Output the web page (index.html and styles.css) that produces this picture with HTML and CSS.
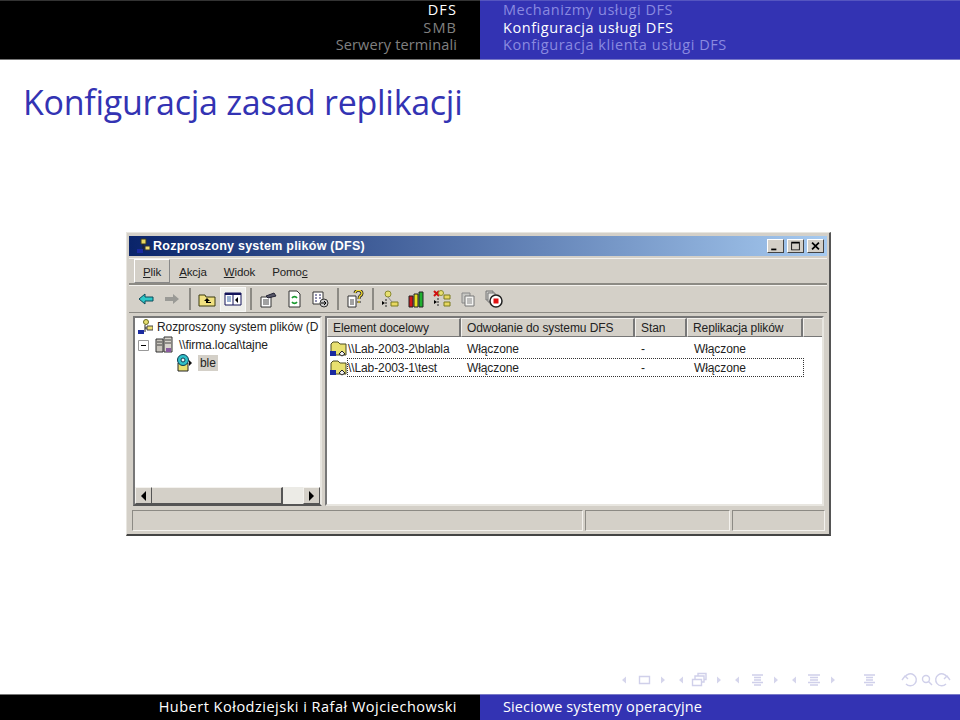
FILE: index.html
```html
<!DOCTYPE html>
<html lang="pl">
<head>
    <meta charset="UTF-8">
    <title>Konfiguracja zasad replikacji</title>
    <link rel="stylesheet" href="styles.css">
</head>
<body>
<div class="slide">
    <header class="top">
        <ul class="top-left">
            <li class="on caps">DFS</li>
            <li class="caps">SMB</li>
            <li>Serwery terminali</li>
        </ul>
        <ul class="top-right">
            <li>Mechanizmy usługi DFS</li>
            <li class="on">Konfiguracja usługi DFS</li>
            <li>Konfiguracja klienta usługi DFS</li>
        </ul>
    </header>

    <h1 class="title">Konfiguracja zasad replikacji</h1>

    <div class="window">
        <div class="titlebar">
            <svg class="ico16" viewBox="0 0 16 16"><path d="M6 1h5v5H6z" fill="#e8d860" stroke="#3a3a20"/><path d="M8 6v7M8 9h4" stroke="#222"/><path d="M10 8h5v4h-5z" fill="#f0e070" stroke="#333"/><path d="M2 11h6v4H2z" fill="#1a2aa0"/></svg>
            <span class="titletext">Rozproszony system plików (DFS)</span>
            <div class="wbtns">
                <span class="wbtn"><svg viewBox="0 0 16 14"><path d="M3 10h6v2H3z" fill="#000"/></svg></span>
                <span class="wbtn"><svg viewBox="0 0 16 14"><path d="M3 2h10v10H3z M4 4v7h8V4z" fill="#000" fill-rule="evenodd"/></svg></span>
                <span class="wbtn close"><svg viewBox="0 0 16 14"><path d="M4 3l8 8M12 3l-8 8" stroke="#000" stroke-width="2"/></svg></span>
            </div>
        </div>

        <div class="menubar">
            <span class="menu open"><u>P</u>lik</span>
            <span class="menu"><u>A</u>kcja</span>
            <span class="menu"><u>W</u>idok</span>
            <span class="menu">Pomo<u>c</u></span>
        </div>

        <div class="toolbar">
            <span class="tool"><svg viewBox="0 0 18 18"><path d="M2 9l6-5v3h8v4H8v3z" fill="#2cc8c8" stroke="#0a4a5a"/></svg></span>
            <span class="tool"><svg viewBox="0 0 18 18"><path d="M16 9l-6-5v3H2v4h8v3z" fill="#9a9a96"/></svg></span>
            <span class="sep"></span>
            <span class="tool"><svg viewBox="0 0 18 18"><path d="M1 5h6l1 2h9v9H1z" fill="#f0e080" stroke="#3a3a10"/><path d="M9 8l-3 3h2v2h5v-1H10v-1h2z" fill="#000"/></svg></span>
            <span class="tool pressed"><svg viewBox="0 0 18 18"><path d="M1 3h16v12H1z" fill="#fff" stroke="#14145a"/><path d="M1 3h16v2H1z" fill="#14145a"/><path d="M9 3v12" stroke="#14145a"/><path d="M3 7h4M3 9h4M3 11h4" stroke="#3a6aaa"/><path d="M14 7v6l-3-3z" fill="#000"/></svg></span>
            <span class="sep"></span>
            <span class="tool"><svg viewBox="0 0 18 18"><path d="M2 7h10v10H2z" fill="#fff" stroke="#333"/><path d="M4 10h6M4 12h6M4 14h6" stroke="#444"/><path d="M7 6l8-3 2 3-8 2z" fill="#556" stroke="#223"/></svg></span>
            <span class="tool"><svg viewBox="0 0 18 18"><path d="M4 1h8l3 3v13H4z" fill="#fff" stroke="#333"/><path d="M7 8a3 3 0 0 1 5 0M12 12a3 3 0 0 1-5 0" stroke="#1a9a30" stroke-width="1.6" fill="none"/></svg></span>
            <span class="tool"><svg viewBox="0 0 18 18"><path d="M2 2h10v12H2z" fill="#fff" stroke="#333"/><path d="M4 5h2M8 5h2M4 8h2M8 8h2M4 11h2" stroke="#226"/><circle cx="13" cy="13" r="4" fill="#ccc" stroke="#333"/><path d="M10 13h5M13 11l2 2-2 2" stroke="#000" fill="none"/></svg></span>
            <span class="sep"></span>
            <span class="tool"><svg viewBox="0 0 18 18"><path d="M2 6h8v11H2z" fill="#fff" stroke="#333"/><path d="M4 10h4M4 12h4M4 14h4" stroke="#444"/><path d="M9 3a3.500 3 0 1 1 5 3c-1 1-1 1-1 3M13 11v2" stroke="#222" stroke-width="3" fill="none"/><path d="M9 3a3.500 3 0 1 1 5 3c-1 1-1 1-1 3M13 11v2" stroke="#f0d830" stroke-width="1.400" fill="none"/></svg></span>
            <span class="sep"></span>
            <span class="tool"><svg viewBox="0 0 18 18"><circle cx="7" cy="4" r="3" fill="#e8e070" stroke="#8a8a30"/><path d="M10 12h7v4h-7z" fill="#e8d860" stroke="#7a7a20"/><path d="M7 7l4 5" stroke="#888"/><path d="M5 9v8" stroke="#222" stroke-dasharray="2 1"/><path d="M1 11l3 2-3 2z" fill="#000"/></svg></span>
            <span class="tool"><svg viewBox="0 0 18 18"><path d="M2 6h4v11H2z" fill="#d01818" stroke="#222"/><path d="M7 4h4v13H7z" fill="#e8e020" stroke="#222"/><path d="M12 2h4v15h-4z" fill="#20b030" stroke="#222"/></svg></span>
            <span class="tool"><svg viewBox="0 0 18 18"><path d="M1 1l5 5M6 1L1 6" stroke="#d01010" stroke-width="2"/><circle cx="8" cy="3" r="2.500" fill="#e8e070" stroke="#8a8a30"/><path d="M11 5h6v4h-6zM11 12h6v4h-6z" fill="#e8d860" stroke="#7a7a20"/><path d="M5 8v9" stroke="#222" stroke-dasharray="2 1"/><path d="M1 10l3 2-3 2z" fill="#000"/></svg></span>
            <span class="tool"><svg viewBox="0 0 18 18"><path d="M3 3h8v10H3z" fill="#c8c8c4" stroke="#888"/><path d="M6 6h9v10H6z" fill="#f2f2f0" stroke="#777"/><path d="M8 9h5M8 11h5M8 13h5" stroke="#888"/></svg></span>
            <span class="tool"><svg viewBox="0 0 18 18"><path d="M1 1h7v9H1z" fill="#c8c8c4" stroke="#777"/><path d="M3 3h7v9H3z" fill="#e8e8e4" stroke="#777"/><circle cx="11" cy="11" r="6" fill="#fff" stroke="#222" stroke-width="1.500"/><path d="M8.500 8.500h5v5h-5z" fill="#e01010"/></svg></span>
        </div>

        <div class="panes">
            <div class="tree">
                <div class="tree-body">
                    <div class="node">
                        <svg class="ico16" viewBox="0 0 16 16"><circle cx="9" cy="3" r="2.500" fill="#e8e070" stroke="#6a6a20"/><path d="M8 6v7M8 9h3" stroke="#222"/><path d="M10 7h6v4h-6z" fill="#f0e070" stroke="#444"/><path d="M1 11h6v4H1z" fill="#1a2aa0"/></svg>
                        <span>Rozproszony system plików (D</span>
                    </div>
                    <div class="node lvl1">
                        <svg class="expander" viewBox="0 0 11 11"><path d="M.5.500h10v10H.5z" fill="#fff" stroke="#999"/><path d="M3 5.500h5" stroke="#000"/></svg>
                        <svg class="ico18" viewBox="0 0 18 18"><path d="M1 3h7v13H1z" fill="#c8c4bc" stroke="#333"/><path d="M9 1h8v15H9z" fill="#d8d4cc" stroke="#333"/><path d="M10 4h6M10 7h6M2 6h5M2 9h5" stroke="#444"/><path d="M11 12h5v4h-5z" fill="#8a5aa0"/></svg>
                        <span>\\firma.local\tajne</span>
                    </div>
                    <div class="node lvl2">
                        <svg class="ico18" viewBox="0 0 18 18"><path d="M3 9h10v8H3z" fill="#e8e070" stroke="#222"/><circle cx="8" cy="6" r="5.500" fill="#30c0c8" stroke="#0a3a50"/><circle cx="8" cy="6" r="2" fill="#e8f8f8" stroke="#0a3a50"/><path d="M14 6l3 3-3 3z" fill="#111"/></svg>
                        <span class="sel">ble</span>
                    </div>
                </div>
                <div class="hscroll">
                    <span class="sbtn"><i class="tri-l"></i></span>
                    <span class="thumb"></span>
                    <span class="track"></span>
                    <span class="sbtn"><i class="tri-r"></i></span>
                </div>
            </div>

            <div class="list">
                <div class="lhead">
                    <span class="col c1">Element docelowy</span>
                    <span class="col c2">Odwołanie do systemu DFS</span>
                    <span class="col c3">Stan</span>
                    <span class="col c4">Replikacja plików</span>
                    <span class="col c5"></span>
                </div>
                <div class="lrow">
                    <svg class="ico18" viewBox="0 0 18 18"><path d="M2 4l2-2h5l2 2h6v11H2z" fill="#e8e070" stroke="#4a4a20"/><path d="M1 11h6v5H1z" fill="#1a2aa0"/><path d="M10 14l3-3 3 3-3 2z" fill="#eee" stroke="#222"/></svg>
                    <span class="cell n1">\\Lab-2003-2\blabla</span>
                    <span class="cell n2">Włączone</span>
                    <span class="cell n3">-</span>
                    <span class="cell n4">Włączone</span>
                </div>
                <div class="lrow">
                    <svg class="ico18" viewBox="0 0 18 18"><path d="M2 4l2-2h5l2 2h6v11H2z" fill="#e8e070" stroke="#4a4a20"/><path d="M1 11h6v5H1z" fill="#1a2aa0"/><path d="M10 14l3-3 3 3-3 2z" fill="#eee" stroke="#222"/></svg>
                    <div class="focus">
                        <span class="cell n1">\\Lab-2003-1\test</span>
                        <span class="cell n2">Włączone</span>
                        <span class="cell n3">-</span>
                        <span class="cell n4">Włączone</span>
                    </div>
                </div>
            </div>
        </div>

        <div class="statusbar">
            <span class="stat s1"></span>
            <span class="stat s2"></span>
            <span class="stat s3"></span>
        </div>
    </div>

    <div class="beamer-nav">
        <svg viewBox="620 672 335 16" width="335" height="16">
            <g fill="#d5d5ec">
                <path d="M622 680l4-3.500v7zM665 680l-4-3.500v7zM679 680l4-3.500v7zM721 680l-4-3.500v7zM735 680l4-3.500v7zM778 680l-4-3.500v7zM792 680l4-3.500v7zM835 680l-4-3.500v7z"/>
            </g>
            <g fill="none" stroke="#d0d0ea" stroke-width="1.400">
                <path d="M639.500 676.500h10v7h-10z"/>
                <path d="M692.500 679.500h9v6h-9zM695 679v-3h9v6h-2M698 676v-2.500h8v6h-2"/>
                <path d="M752 675h11M754 677.500h7M754 680h7M752 682.500h11M754 685h7"/>
                <path d="M808 675h12M810 677.500h8M810 680h8M808 682.500h12M810 685h8"/>
                <path d="M864 675h11M866 677.500h7M866 680h7M864 682.500h11M866 685h7"/>
                <path d="M905 677a6 6 0 1 1 1 7M902 680l3-4 3 3"/>
                <circle cx="926" cy="679" r="3.500"/>
                <path d="M928.500 681.500l3.500 3.500"/>
                <path d="M947 677a6 6 0 1 0-1 7M950 680l-3-4-3 3"/>
            </g>
        </svg>
    </div>

    <footer class="bottom">
        <div class="foot-left">Hubert Kołodziejski i Rafał Wojciechowski</div>
        <div class="foot-right">Sieciowe systemy operacyjne</div>
    </footer>
</div>
</body>
</html>
```

FILE: styles.css
```css
/* slide */
* {
    box-sizing: border-box;
    margin: 0;
    padding: 0;
}

body {
    background-color: #fff;
    font-family: "Open Sans", "Liberation Sans", sans-serif;
}

.slide {
    width: 960px;
    height: 720px;
    display: flex;
    flex-direction: column;
    overflow: hidden;
}

/* top bar */
.top {
    display: flex;
    height: 60px;
    flex: none;
    font-size: 14.5px;
    line-height: 17.5px;
    letter-spacing: 0.55px;
}

.top ul {
    list-style: none;
    width: 480px;
}

.top-left {
    background-color: #000;
    color: #808080;
    text-align: right;
    padding-right: 23px;
    letter-spacing: 0.14px;
    border-top: 1px solid #333;
    border-bottom: 1px solid #777;
}

.top-right {
    background-color: #3333b3;
    color: #8a8ae0;
    padding-left: 23px;
    border-top: 1px solid #5555c0;
    border-bottom: 1px solid #7a7ac8;
}

.top .on {
    color: #fff;
}

.top .caps {
    letter-spacing: 1.1px;
}

.title {
    font-size: 34px;
    font-weight: 400;
    line-height: 46px;
    letter-spacing: -0.28px;
    color: #3333b3;
    padding: 19px 0 0 23px;
    flex: none;
}

/* window */
.window {
    width: 705px;
    height: 304px;
    margin: 107px 0 0 126px;
    flex: none;
    background-color: #d4d0c8;
    border: 1px solid #e8e6e0;
    border-right: 2px solid #555;
    border-bottom: 2px solid #444;
    padding: 3px 2px 2px 2px;
    display: flex;
    flex-direction: column;
    font-family: "Liberation Sans", Arial, sans-serif;
    font-size: 12px;
    letter-spacing: -0.1px;
    color: #222;
}

.titlebar {
    height: 20px;
    flex: none;
    display: flex;
    align-items: center;
    background: linear-gradient(to right, #0a246a, #a6caf0);
    color: #fff;
    font-weight: 700;
    font-size: 12.5px;
    padding-left: 6px;
    letter-spacing: 0.25px;
}

.titletext {
    margin-left: 2px;
    flex: 1;
}

.wbtns {
    display: flex;
    gap: 3px;
    padding-right: 3px;
}

.wbtn {
    width: 17px;
    height: 14px;
    background-color: #d4d0c8;
    border: 1px solid #fff;
    border-right-color: #444;
    border-bottom-color: #444;
    display: flex;
}

.wbtn svg {
    width: 100%;
    height: 100%;
}

.ico16 {
    width: 16px;
    height: 16px;
    flex: none;
}

.ico18 {
    width: 18px;
    height: 18px;
    flex: none;
}

.menubar {
    height: 27px;
    flex: none;
    display: flex;
    align-items: stretch;
    margin-top: 2px;
    padding-left: 5px;
    font-size: 11.5px;
    border-top: 1px solid #f4f2ee;
    border-bottom: 2px solid #8c8a84;
}

.menu {
    display: flex;
    align-items: center;
    padding: 1px 8px 0;
    margin-right: 1px;
    height: 24px;
}

.menu.open {
    border-left: 1px solid #fff;
    border-top: 1px solid #fff;
    border-right: 1px solid #888;
    border-bottom: 1px solid #888;
}

.toolbar {
    height: 28px;
    flex: none;
    display: flex;
    align-items: center;
    padding-left: 4px;
    border-top: 1px solid #f4f2ee;
    border-bottom: 1px solid #8c8a84;
}

.tool {
    width: 26px;
    height: 25px;
    flex: none;
    display: flex;
    align-items: center;
    justify-content: center;
}

.tool svg {
    width: 18px;
    height: 18px;
}

.tool.pressed {
    background-color: #eeeeea;
    border: 1px solid #f8f8f6;
}

.sep {
    width: 9px;
    height: 22px;
    flex: none;
    background: linear-gradient(#8c8a84, #8c8a84) center / 2px 100% no-repeat;
}

/* panes */
.panes {
    flex: 1;
    min-height: 0;
    display: flex;
    gap: 3px;
    padding: 3px 3px 3px 4px;
}

.tree,
.list {
    background-color: #fff;
    border: 2px solid #777;
    border-right-color: #e8e6e0;
    border-bottom-color: #e8e6e0;
    display: flex;
    flex-direction: column;
}

.tree {
    width: 189px;
    flex: none;
    border-bottom-color: #555;
}

.list {
    flex: 1;
    min-width: 0;
}

.tree-body {
    flex: 1;
    overflow: hidden;
}

.node {
    display: flex;
    align-items: center;
    gap: 4px;
    height: 18px;
    padding-left: 2px;
    white-space: nowrap;
}

.lvl1 {
    padding-left: 3px;
    gap: 6px;
}

.lvl2 {
    padding-left: 40px;
    gap: 5px;
}

.expander {
    width: 11px;
    height: 11px;
    flex: none;
}

.sel {
    background-color: #d4d0c8;
    padding: 1px 2px;
}

.hscroll {
    height: 17px;
    flex: none;
    display: flex;
}

.sbtn {
    width: 17px;
    flex: none;
    background-color: #d4d0c8;
    border: 1px solid #f4f2ee;
    border-right-color: #555;
    border-bottom-color: #555;
    display: flex;
    align-items: center;
    justify-content: center;
}

.tri-l,
.tri-r {
    width: 0;
    height: 0;
    border-top: 5px solid transparent;
    border-bottom: 5px solid transparent;
}

.tri-l {
    border-right: 5px solid #000;
}

.tri-r {
    border-left: 5px solid #000;
}

.thumb {
    width: 131px;
    flex: none;
    background-color: #d4d0c8;
    border-top: 1px solid #f4f2ee;
    border-right: 2px solid #555;
    border-bottom: 1px solid #555;
}

.track {
    flex: 1;
    background-color: #ecebe6;
}

/* list view */
.lhead {
    height: 19px;
    flex: none;
    display: flex;
    background-color: #d4d0c8;
}

.col {
    padding-left: 5px;
    display: flex;
    align-items: center;
    border-top: 1px solid #f4f2ee;
    border-left: 1px solid #f4f2ee;
    border-right: 2px solid #777;
    border-bottom: 1px solid #777;
}

.c1 { width: 134px; }
.c2 { width: 174px; }
.c3 { width: 52px; }
.c4 { width: 116px; }
.c5 { flex: 1; border-right: none; }

.lrow {
    display: flex;
    align-items: center;
    height: 19px;
    padding-left: 2px;
}

.lhead + .lrow {
    margin-top: 2px;
}

.focus {
    display: flex;
    align-items: center;
    height: 19px;
    flex: none;
    outline: 1px dotted #333;
    outline-offset: -1px;
}

.cell {
    display: block;
    flex: none;
    white-space: nowrap;
    padding-left: 1px;
}

.n1 { width: 119px; }
.n2 { width: 174px; }
.n3 { width: 53px; }
.n4 { width: 111px; }

/* status bar */
.statusbar {
    height: 23px;
    flex: none;
    display: flex;
    gap: 2px;
    padding: 1px 2px 1px 3px;
}

.stat {
    border: 1px solid #8c8a84;
    border-right-color: #f4f2ee;
    border-bottom-color: #f4f2ee;
}

.s1 { width: 451px; }
.s2 { width: 145px; }
.s3 { flex: 1; }

/* beamer navigation + footer */
.beamer-nav {
    margin-top: auto;
    flex: none;
    height: 22px;
    display: flex;
    justify-content: flex-end;
    padding-right: 5px;
}

.bottom {
    height: 26px;
    flex: none;
    display: flex;
    font-size: 14.5px;
    line-height: 24px;
    color: #fff;
}

.foot-left {
    width: 480px;
    background-color: #000;
    border-top: 1px solid #777;
    text-align: right;
    padding-right: 23px;
    letter-spacing: 0.5px;
}

.foot-right {
    width: 480px;
    background-color: #3333b3;
    border-top: 1px solid #7a7ac8;
    padding-left: 23px;
    letter-spacing: 0.12px;
}
```
